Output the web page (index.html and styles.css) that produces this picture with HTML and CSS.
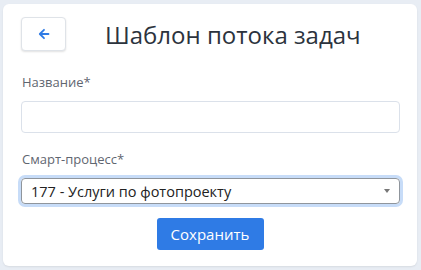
FILE: index.html
```html
<html>
    <head>
        <meta name="viewport" content="width=device-width, initial-scale=1">
        <link rel="stylesheet" href="styles.css">
    </head>
    <body>
        <div class="card">
            <div class="head">
                <button class="back">
                    <svg width="12" height="12" viewBox="0 0 12 12"><path d="M10.5 6H2M6 1.8L1.8 6 6 10.2" fill="none" stroke="#2f7be5" stroke-width="1.8" stroke-linecap="round" stroke-linejoin="round"/></svg>
                </button>
                <h1>Шаблон потока задач</h1>
            </div>
            <label class="lbl">Название*</label>
            <input class="field" type="text">
            <label class="lbl">Смарт-процесс*</label>
            <div class="select">
                <span>177 - Услуги по фотопроекту</span>
                <span class="caret"></span>
            </div>
            <div class="actions">
                <button class="save">Сохранить</button>
            </div>
        </div>
    </body>
</html>
```
FILE: styles.css
```css
body{
    margin: 0; background: #e8edf4; font-family: "Open Sans", "Noto Sans", sans-serif;
    padding: 4px 4px 4px 3px;
}
.card{
    background: #fff; border-radius: 6px; height: 262px; box-sizing: border-box;
    padding: 13px 18px 0 18px;
    box-shadow: 0 1px 2px rgba(0,0,0,0.08);
}
.head{
    display: flex; align-items: center; gap: 39px; height: 34px; margin-bottom: 22px;
}
.back{
    width: 45px; height: 34px; background: #fff; border: 1px solid #dfe3e8; border-radius: 4px;
    box-shadow: 0 1px 2px rgba(0,0,0,0.12); display: flex; align-items: center; justify-content: center; padding: 0;
}
h1{
    margin: 0; font-size: 24px; font-weight: 400; color: #2c333d;
}
.lbl{
    display: block; font-size: 13px; color: #5f6670; margin: 0 0 10px 1px; line-height: 18px;
}
.field{
    display: block; width: 379px; height: 32px; box-sizing: border-box; border: 1px solid #dbe1ea;
    border-radius: 4px; margin-bottom: 17px;
}
.select{
    width: 379px; height: 26px; box-sizing: border-box; border: 1px solid #8f959c; border-radius: 4px;
    box-shadow: 0 0 0 3px #c7dcf8; display: flex; align-items: center; justify-content: space-between;
    padding: 0 9px 0 9px; font-size: 14.5px; color: #222; margin-top: 3px;
}
.caret{
    width: 0; height: 0; border-left: 3px solid transparent; border-right: 3px solid transparent;
    border-top: 4px solid #777;
}
.actions{
    display: flex; justify-content: center; margin-top: 14px;
}
.save{
    width: 107px; height: 32px; background: #2f7be5; color: #fff; border: none; border-radius: 3px;
    font-family: "Open Sans", "Noto Sans", sans-serif; font-size: 15px;
}
```
